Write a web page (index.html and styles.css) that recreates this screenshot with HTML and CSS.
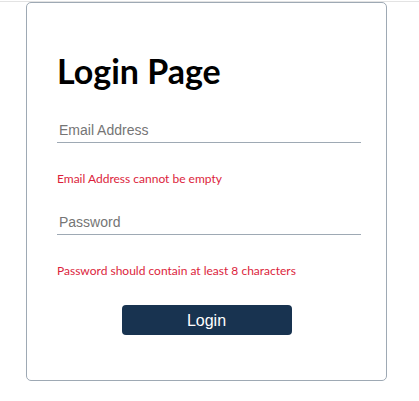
FILE: index.html
```html
<!DOCTYPE html>
<html lang="en">
<head>
<meta charset="utf-8">
<title>Login Page</title>
<link rel="stylesheet" href="styles.css">
</head>
<body>
<div class="topline"></div>
<div class="card">
  <h1 class="title">Login Page</h1>
  <form class="form">
    <input class="field" type="email" placeholder="Email Address">
    <p class="error">Email Address cannot be empty</p>
    <input class="field field-pass" type="password" placeholder="Password">
    <p class="error">Password should contain at least 8 characters</p>
    <button class="btn" type="button">Login</button>
  </form>
</div>
</body>
</html>
```
FILE: styles.css
```css
html, body {
  margin: 0;
  padding: 0;
  background: #ffffff;
}
.topline {
  height: 1px;
  margin-top: 1px;
  background: #e3e3e3;
}
.card {
  box-sizing: border-box;
  width: 361px;
  height: 379px;
  margin-left: 26px;
  border: 1px solid #9ea9b4;
  border-radius: 5px;
  background: #ffffff;
  padding: 48px 25px 0 30px;
}
.title {
  margin: 0;
  font-family: Lato, "Open Sans", sans-serif;
  font-weight: 700;
  font-size: 34px;
  line-height: 40px;
  color: #000;
}
.form {
  display: flex;
  flex-direction: column;
  margin-top: 27px;
}
.field {
  box-sizing: border-box;
  width: 304px;
  height: 25px;
  margin: 0;
  padding: 0 2px;
  border: none;
  border-bottom: 1px solid #9ea9b4;
  outline: none;
  font-family: "Liberation Sans", Arial, sans-serif;
  font-size: 14px;
  color: #333;
  background: transparent;
}
.field::placeholder {
  color: #757575;
}
.field-pass {
  margin-top: 23px;
}
.error {
  margin: 28px 0 0;
  font-family: Lato, "Open Sans", sans-serif;
  font-size: 12px;
  line-height: 16px;
  color: #dc1e3c;
}
.btn {
  align-self: center;
  width: 170px;
  height: 30px;
  margin-top: 26px;
  margin-right: 5px;
  border: none;
  border-radius: 4px;
  background: #183350;
  color: #ffffff;
  font-family: "Liberation Sans", Arial, sans-serif;
  font-size: 16px;
  line-height: 18px;
  padding: 2px 0 0;
  cursor: pointer;
}
```
